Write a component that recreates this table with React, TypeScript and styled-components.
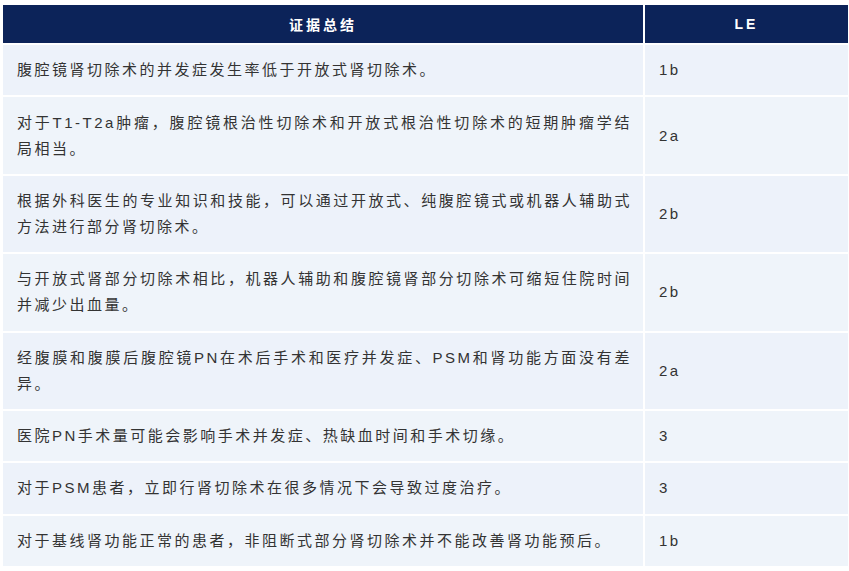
import React from "react";
import styled, { createGlobalStyle } from "styled-components";

const Global = createGlobalStyle`
  html, body { margin: 0; padding: 0; background: #ffffff; }
  body { font-family: "Liberation Sans", "Noto Sans CJK SC", sans-serif; }
`;

const Page = styled.div`
  padding: 5px 1px 0 3px;
`;

const Table = styled.div`
  display: grid;
  grid-template-columns: 640px 1fr;
  gap: 2px;
  background: #ffffff;
`;

const HeadCell = styled.div`
  background: #0c2359;
  color: #ffffff;
  height: 38px;
  display: flex;
  align-items: center;
  justify-content: center;
  font-size: 14px;
  font-weight: 700;
  letter-spacing: 3px;
  font-family: "Liberation Sans", "Noto Sans CJK SC", sans-serif;
`;

const Cell = styled.div<{ $alt?: boolean }>`
  background: ${(p) => (p.$alt ? "#eff4fa" : "#edf2fa")};
  color: #333333;
  padding: 12.2px 14px;
  display: flex;
  align-items: center;
  font-size: 15px;
  line-height: 26px;
  letter-spacing: 2.5px;
`;

const Text = styled.div`
  width: 100%;
`;

const Line = styled.span<{ $last?: boolean }>`
  display: block;
  text-align: ${(p) => (p.$last ? "left" : "justify")};
  text-align-last: ${(p) => (p.$last ? "left" : "justify")};
  margin-right: ${(p) => (p.$last ? "0" : "-3px")};
`;

const rows: { text: string[]; le: string }[] = [
  { text: ["腹腔镜肾切除术的并发症发生率低于开放式肾切除术。"], le: "1b" },
  { text: ["对于T1-T2a肿瘤，腹腔镜根治性切除术和开放式根治性切除术的短期肿瘤学结", "局相当。"], le: "2a" },
  { text: ["根据外科医生的专业知识和技能，可以通过开放式、纯腹腔镜式或机器人辅助式", "方法进行部分肾切除术。"], le: "2b" },
  { text: ["与开放式肾部分切除术相比，机器人辅助和腹腔镜肾部分切除术可缩短住院时间", "并减少出血量。"], le: "2b" },
  { text: ["经腹膜和腹膜后腹腔镜PN在术后手术和医疗并发症、PSM和肾功能方面没有差", "异。"], le: "2a" },
  { text: ["医院PN手术量可能会影响手术并发症、热缺血时间和手术切缘。"], le: "3" },
  { text: ["对于PSM患者，立即行肾切除术在很多情况下会导致过度治疗。"], le: "3" },
  { text: ["对于基线肾功能正常的患者，非阻断式部分肾切除术并不能改善肾功能预后。"], le: "1b" },
];

export default function App() {
  return (
    <Page>
      <Global />
      <Table>
        <HeadCell>证据总结</HeadCell>
        <HeadCell>LE</HeadCell>
        {rows.map((r, i) => (
          <React.Fragment key={i}>
            <Cell $alt={i % 2 === 1}>
              <Text>
                {r.text.map((t, j) => (
                  <Line key={j} $last={j === r.text.length - 1}>
                    {t}
                  </Line>
                ))}
              </Text>
            </Cell>
            <Cell $alt={i % 2 === 1}>{r.le}</Cell>
          </React.Fragment>
        ))}
      </Table>
    </Page>
  );
}
